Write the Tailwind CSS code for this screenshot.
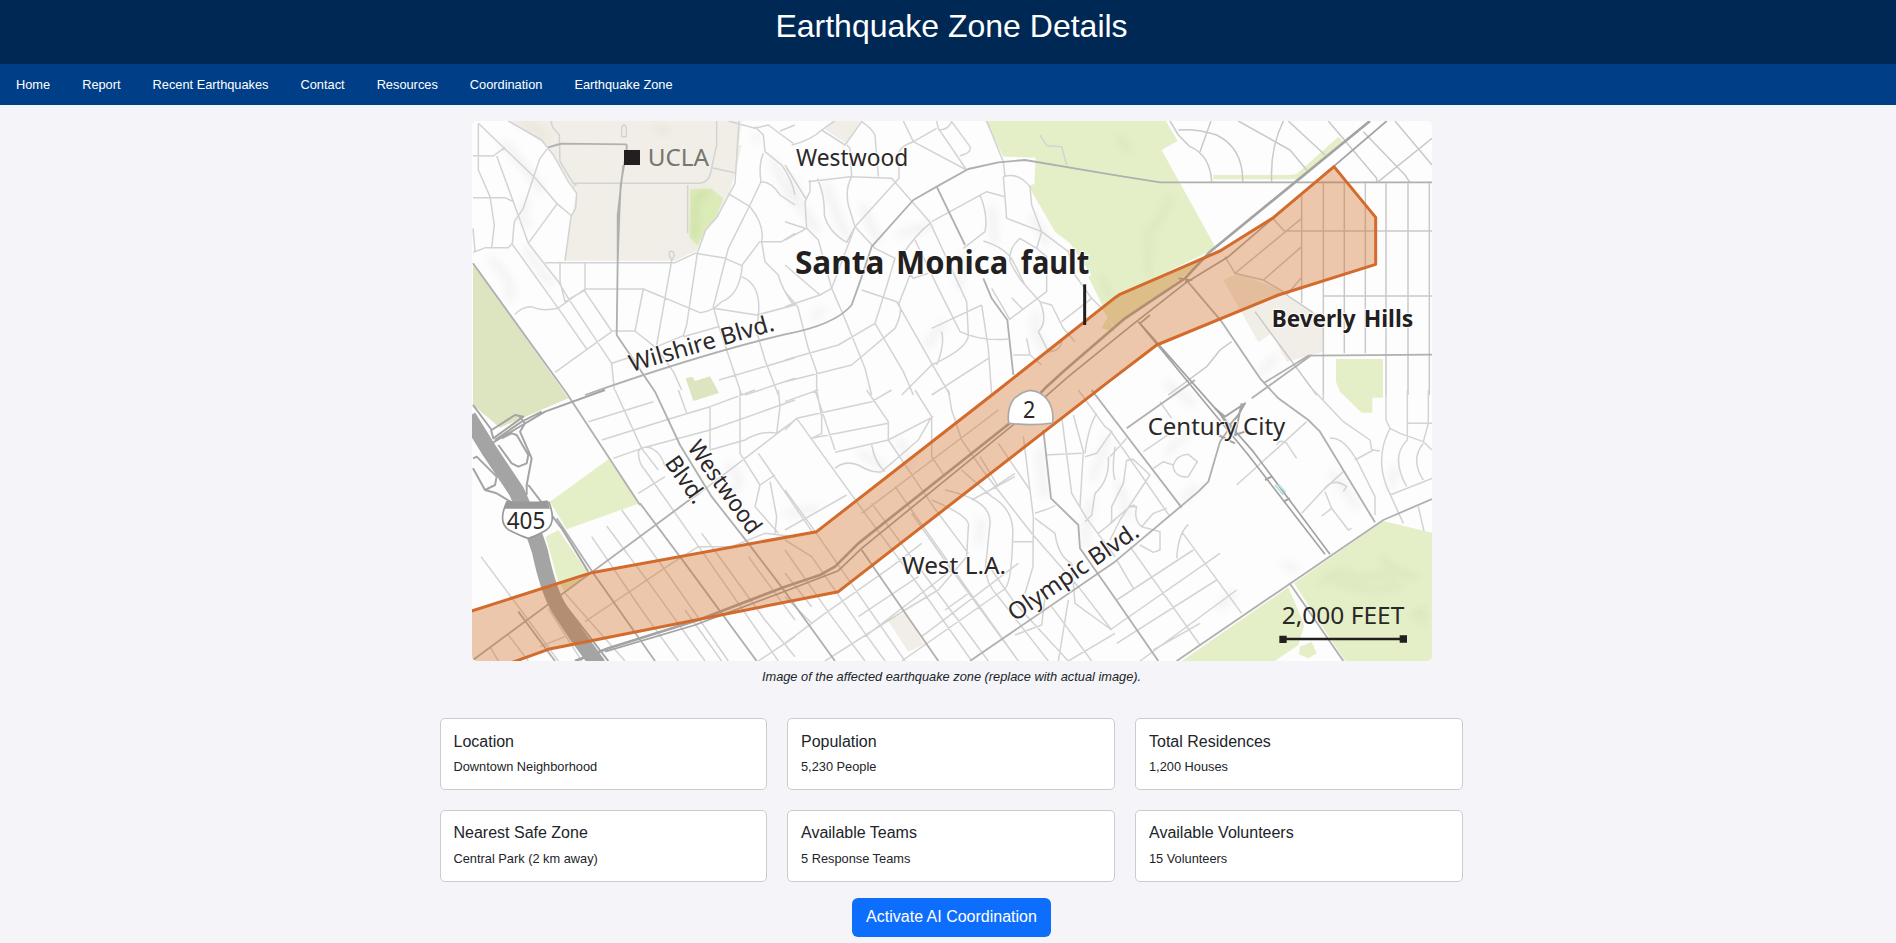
<!DOCTYPE html>
<html lang="en">
<head>
<meta charset="utf-8">
<title>Earthquake Zone Details</title>
<script src="https://cdn.jsdelivr.net/npm/@tailwindcss/browser@4"></script>
</head>
<body class="h-[943px] overflow-hidden bg-[#f4f4f9] font-['Liberation_Sans',Arial,sans-serif] text-[#212529]">
<div class="w-[1903px]">
  <header class="h-16 bg-[#002855] pt-[7px] text-center text-white">
    <h1 class="text-[32px] leading-[38px] font-normal">Earthquake Zone Details</h1>
  </header>
  <nav class="flex h-[41px] items-center gap-8 bg-[#003f88] px-4 text-[12.8px] text-white">
    <a>Home</a><a>Report</a><a>Recent Earthquakes</a><a>Contact</a><a>Resources</a><a>Coordination</a><a>Earthquake Zone</a>
  </nav>
  <main class="flex flex-col items-center pt-4">
    <figure class="w-[959px]">
      <svg class="block h-[540px] w-[960px] rounded-[5px] bg-[#fdfdfd]" viewBox="21 18 2880 1620" font-family="'Noto Sans', sans-serif" stroke-linejoin="round">
        <defs><filter id="soft" x="-20%" y="-20%" width="140%" height="140%"><feGaussianBlur stdDeviation="12"/></filter></defs>
        <!-- terrain shading -->
        <g fill="none" stroke="#e6e6e6" stroke-width="22" opacity=".5" filter="url(#soft)">
          <path d="M110 80Q190 160 230 230M190 250Q150 320 200 330M70 430Q160 500 130 560M180 400Q230 470 260 510M920 130L990 270M870 80L880 60M980 190Q1010 290 1060 350M1080 200Q1120 320 1150 370M1190 270L1240 380M1300 360L1400 330M1440 620L1380 700M1580 270L1590 390M1700 300L1750 390M1720 590Q1690 640 1750 720M1500 410L1480 520M1040 610L1080 580M1300 970L1340 1050M1260 1060L1180 1010M960 1200L1060 1180M780 1050Q850 1080 800 1140M1550 1210L1540 1290M1720 1000L1740 1150M1880 1150Q1850 1280 1870 1300M2100 1020L2180 940M2150 1160L2200 1110M2450 1350L2500 1360M2260 1480L2310 1430M1880 1100L1930 960M1960 1100L1990 1210M2600 1070L2680 1180M2790 1050L2780 1120M2100 800L2190 870M2380 780L2440 720"/>
        </g>
        <!-- campus and civic areas -->
        <g fill="#f0eee6">
          <path d="M130 18H765L755 90H830L812 175L790 240L755 310L722 342L700 405L630 437H298L320 300L335 235L265 120L230 80Z"/>
          <path d="M1100 18H1188L1142 85L1075 40Z"/>
          <path d="M765 18H830L812 175L740 158L755 40Z"/>
          <path d="M2275 495L2320 475L2435 520L2575 610V710L2465 740L2420 655L2380 682Z"/>
          <path d="M1268 1515L1320 1493L1378 1588L1330 1610Z"/>
        </g>
        <path d="M170 22Q220 30 245 75M570 40L610 50" stroke="#ddd8cd" stroke-width="8" fill="none" filter="url(#soft)"/>
        <!-- parks -->
        <g fill="#e4efc8">
          <path d="M675 222L740 222L775 250L750 315L722 345L697 392L672 365Z" fill="#dcecb9"/>
          <path d="M24 445L310 850L105 938L24 870Z" fill="#dde5c0"/>
          <path d="M662 790L682 785L690 798L735 784L762 834L685 858Z" fill="#dde5c0"/>
          <path d="M1560 18H2103L2138 78L2090 105L2253 400L1965 538L1910 640L1950 650L1870 485L1880 480L1815 385L1770 350L1690 212L1708 207L1712 128L1615 125Z"/>
          <path d="M1965 538L2253 410L1950 640L1910 580Z"/>
          <path d="M2245 180H2475L2495 177L2620 65L2635 80L2510 193H2245Z"/>
          <path d="M2613 732H2754V848H2722V893H2690L2625 830L2613 800Z"/>
          <path d="M255 1160L430 1033L523 1165L305 1243Z"/>
          <path d="M242 1265L280 1245L370 1375L300 1430L280 1400Z"/>
          <path d="M2487 1405L2755 1218L2901 1253V1638H2640Z"/>
          <path d="M2150 1638L2470 1417L2518 1530L2500 1590L2430 1638Z"/>
          <path d="M2505 1595L2540 1580L2555 1615L2530 1630L2502 1618Z"/>
        </g>
        <path d="M2560 1410Q2600 1370 2640 1370L2680 1390Q2750 1370 2790 1390M2760 1320Q2740 1350 2860 1390M2600 1395Q2700 1440 2820 1410M2840 1510Q2890 1450 2870 1530" fill="none" stroke="#c9d5a8" stroke-width="9" opacity=".7" filter="url(#soft)"/>
        <path d="M1960 60Q1980 100 1995 110M2120 240Q2080 330 2050 350V480M1910 480L1935 550" fill="none" stroke="#cbd8ad" stroke-width="9" opacity=".7" filter="url(#soft)"/>
        <path d="M690 370Q680 250 710 235L735 240" fill="none" stroke="#b9cf91" stroke-width="14" opacity=".6" filter="url(#soft)"/>

        <!-- local streets, north-west -->
        <g fill="none" stroke="#d3d3d3" stroke-width="4.5">
          <path d="M40 25L210 188L275 265L320 303M40 25V165L75 245L88 330L80 398M24 122L85 123L120 97M95 123L145 260L190 385L280 500L310 550L440 745L448 825M24 248H120L145 260M24 340L30 410M24 412L62 398H130L142 385L148 320L175 280L205 188L225 130L250 97L285 85M275 268L192 382M130 18L230 75L265 120L310 200L335 235L332 280L318 305L300 437M258 18L262 35L283 60L285 140L325 205L345 205H700Q735 205 740 158L755 90V18M740 158L812 174M822 18L810 205L757 305L722 345L697 415L665 630L655 662L575 695M668 210V355M325 213L340 203M470 65V38Q477 22 484 38V65ZM240 443H630L690 415L775 428L830 452L884 380H950L990 355M360 443V530L440 648H510L535 522H360L278 580Q230 590 200 575Q170 575 150 598M140 385L280 580L365 702M285 440V500L300 560L360 525M535 522L705 593Q740 590 770 560Q825 540 832 450M510 648L575 700L625 770L650 825M270 772L440 650M620 437L575 690M620 435Q605 410 620 408Q635 415 620 437M790 236L855 275Q900 330 890 380L900 440L940 480Q950 520 985 570M870 35L895 60L900 110L950 150Q980 190 990 240M790 18L870 40L910 30L950 60L985 85M990 30L945 48M895 115Q880 150 888 200Q920 200 945 240L990 270M888 200L855 270L790 400L745 575L760 630L830 840M830 485Q890 510 880 600L875 650L900 735L940 840M440 745L500 725M745 580L875 600L990 570M655 665L760 635M762 795L990 728M840 840L990 790"/>
        </g>
        <g fill="none" stroke="#d3d3d3" stroke-width="4.5" transform="translate(960 0)">
          <path d="M355 18L385 80L545 165M455 18L460 40L545 165M455 40L385 80Q340 95 342 120V190L210 335L140 520M460 45Q490 45 500 20L555 95Q560 115 525 122M20 90Q80 75 110 45L180 90L230 20Q260 40 270 60L280 185M150 18L110 45M70 200L195 185L320 190L435 322L545 560L550 660Q550 700 440 750L350 840M75 195V230L60 260L65 340L100 375L140 520L175 600L240 760L260 840M0 375L65 340M0 150L65 255M0 320L60 340M97 190Q120 240 118 300Q130 350 185 382L210 335L190 270Q180 220 200 185L195 100L185 90M210 335L270 400L330 430L300 530L270 625L160 690L0 735M230 525L335 560L440 745L495 840M335 560Q360 580 330 640L200 750L0 800M270 625L355 770L385 840M0 450L105 540L140 520M105 540L0 575M0 530L38 575L70 700L95 770V840M440 320L605 230L660 245M585 240Q610 300 600 350L535 400M390 375L460 520L525 650Q590 680 670 672M435 325Q390 360 345 430L385 490L375 480L340 570M385 490L430 475M595 378Q670 400 690 450L720 510L765 560Q790 620 760 650L790 710Q825 710 830 680M705 370L755 400L785 425V530L675 612M705 370Q670 400 675 440Q700 490 720 510M770 350L755 400M655 185L665 310L770 350M655 185Q700 170 735 215L740 270L770 350L850 410L870 480L920 550L950 580M605 18L655 140L660 185M680 548L715 585M765 560L800 570L835 640L870 680M920 550L830 620M675 615Q650 570 620 520M590 570L610 700L620 840M590 570L440 640M685 720H735L770 750M725 670L735 720M610 730L440 840M470 650Q480 690 455 750M765 60L785 92L830 95L845 150"/>
        </g>
        <g fill="none" stroke="#c9c9c9" stroke-width="4.5" transform="translate(1935 0)">
          <path d="M180 18L205 60L240 95Q300 120 305 200M205 45Q260 40 320 60Q400 100 398 200M303 18L270 110M385 18L540 105L590 165M520 18Q480 100 485 200M535 18L645 120M655 18L800 190V203M760 50L885 180L900 203M855 18L966 150M966 70L805 200M575 240V565M640 205V840M703 205V715M766 205V715M828 205V840M894 205V840M958 205V840M525 348H966M640 543H966M490 312L525 350M575 310L375 475M575 395L460 495M575 487L530 540L605 590L640 640M345 425L375 475L460 495L520 530M435 590L620 840M365 680L330 705L290 755L175 840"/>
        </g>

        <!-- local streets, south -->
        <g fill="none" stroke="#d3d3d3" stroke-width="4.5" transform="translate(0 825)">
          <path d="M370 95L565 35M410 150L620 85L735 50L870 0M445 205L530 175L735 120L990 30M450 0L530 175L580 240M520 185Q530 165 560 175Q590 190 600 230M520 185Q520 220 540 240L680 440L820 640L910 770L940 813M640 0L665 70M825 0V190L885 285L870 350L940 430M735 50V180M735 180L840 150Q890 120 935 130M940 0L945 50L935 130L990 90M520 310L600 260M690 320L990 90M880 190L1045 430M885 285L930 255M915 275L935 380L930 430M380 440L530 660L640 813M425 408L560 590L720 813M470 360L600 540L790 813M710 430L770 510L900 690L990 800M48 500L190 690L280 813M130 735L190 813M75 770L100 813M250 655L350 813M360 695L620 520L700 470H800L900 430L990 440M225 770L300 740M300 610L480 813M850 500L990 690M660 660L770 813M880 813L990 740"/>
        </g>
        <g fill="none" stroke="#d3d3d3" stroke-width="4.5" transform="translate(960 825)">
          <path d="M0 35L100 0M95 0L110 80V130L80 145M0 120L35 85L260 35L320 0M35 85L240 370L400 585L560 813M90 0L150 180M150 187L310 150L445 80M245 0L310 95V150L445 350L550 490M150 235Q180 210 220 225Q260 250 290 245L400 150L440 80M80 145L310 100M390 0L440 80V200L480 260M260 165Q270 220 300 245M490 0L500 60L530 150L600 250L740 430L880 590L980 720M0 420L185 315M0 300L80 410L360 813M230 370L640 60M0 450L80 500L240 730L300 813M260 340L430 570L610 813M330 290L700 813M380 370L500 540L700 813M440 330Q560 380 550 410L545 500L460 600L360 660L120 813M480 300Q620 330 615 400L605 500Q590 570 640 620L790 813M530 240L620 320Q690 360 683 440Q680 590 655 600L350 813M560 330L690 260M600 310L690 250M640 160L735 300L745 380L744 530L720 610M683 455H745M585 200L640 290M715 140L735 300M750 370Q810 350 810 345M750 385L810 430Q820 500 860 520L870 640L980 720M690 735L770 705L780 620M850 630L820 813M830 80L860 310L905 385L990 500M865 75L895 185L885 350M890 190L780 195M935 70Q910 110 900 190M880 0L960 110L980 125L935 190L900 200M970 200Q975 270 930 310L920 375L900 395M0 760L120 670L320 530L410 460M80 700L0 620M0 550L80 650M0 480L140 680L240 813M220 680L400 560M240 740L500 540M410 740L700 520M480 660L550 610M620 540L690 640L850 813M800 650L920 813M850 813L990 730M990 170Q980 240 990 270M940 430L990 390"/>
        </g>
        <g fill="none" stroke="#d3d3d3" stroke-width="4.5" transform="translate(1935 825)">
          <path d="M0 120L180 380M150 35L185 85M100 185L180 130M50 210L40 280L5 350V395M50 210L70 208L120 255L30 390L0 450M130 235L160 215L190 225M190 225Q200 195 235 193L262 215L235 260Q200 265 190 235ZM0 400L60 350L80 350Q70 390 95 410L130 370L170 355M60 350L75 345M95 410L150 425V480L130 487L90 465M200 505Q205 430 235 403M215 425L395 670M20 630L250 480M0 720L330 490M20 760L320 570M90 813L380 600M130 780L270 700M60 470L270 765M20 510L70 595M0 200L50 145M380 285L430 240L590 95M575 370L640 300L700 245M640 300Q670 260 710 290L700 305M645 305L665 355L715 420L725 415M665 355L635 378M500 165Q510 145 530 160L560 205M660 145Q700 140 740 210L795 320V375M735 210L790 180L810 183M610 0L700 95L780 150L785 180M640 0V30M828 0V90L840 115Q795 200 830 290L880 400M840 115L870 130L940 155L966 180M892 0V100H966M955 0V100L940 155M892 100V150Q840 200 890 290M940 160Q900 210 940 270M840 315L966 265M925 350L942 423"/>
        </g>

        <!-- arterials -->
        <g fill="none" stroke="#b0b0b0" stroke-width="5.5">
          <path d="M250 97L290 86L485 88M475 150L458 300V440M485 88V105L467 210L463 300L458 440L455 660L570 830L645 990L740 1145L850 1285M24 445L305 835L525 1170M360 840Q700 720 960 658Q1110 630 1160 570L1185 500L1220 395L1345 255L1415 215L1510 162L1600 142L1680 135L1935 178L2085 202H2901M1415 215L1500 390M1555 490L1580 550L1627 615L1645 780"/>
          <path d="M1735 945L1758 1150L1840 1230L1845 1300L1950 1450L2080 1638"/>
          <path d="M525 1165L660 1345L875 1638M275 1210L385 1375L570 1638M850 1285L960 1430L1110 1638M1190 1305L1420 1638"/>
          <path d="M24 1635L700 1135M1515 1638L1950 1340L2200 1130L2230 1100L2265 980L2300 930"/>
          <path d="M1880 825L2150 1178M2160 490L2270 620L2385 790L2440 850L2530 915L2565 950L2730 1222M1985 940L2190 795M2360 850L2540 720M2395 805L2530 722L2901 719"/>
          <path d="M2135 1638L2755 1215L2901 1152M2473 1403L2635 1638"/>
          <path d="M160 1490L270 1638"/>
        </g>
        <!-- Santa Monica Blvd. and parallel carriageways -->
        <g fill="none" stroke="#a3a3a3" stroke-width="8">
          <path d="M2715 18L2235 410L2160 490L1980 610L1800 765L1740 820L1650 912L1180 1285L1110 1355L1065 1380L960 1415L700 1515L430 1600L330 1638"/>
          <path d="M2765 18L2290 425L2160 505L1995 635L1810 785L1650 925L1190 1300L1120 1367L970 1425L690 1530L420 1610" stroke-width="5"/>
          <path d="M2055 600L2025 625L2365 1010L2595 1318M2020 620L2350 1020L2580 1318M2140 490L2180 495L2160 500" stroke-width="5"/>
          <path d="M2250 880L2280 905L2310 885L2340 865L2320 900L2290 935L2265 895L2300 945M2330 865L2310 960L2340 950M2260 960L2310 985M2400 1095L2420 1085M2455 1160L2475 1150" stroke-width="6"/>
        </g>
        <path d="M2430 1110L2455 1140M2440 1108L2462 1132" stroke="#b4dfe0" stroke-width="5"/>

        <!-- Interstate 405 and ramps -->
        <g fill="none" stroke="#a4a4a4">
          <path d="M10 905L75 1010L155 1130Q200 1230 225 1310Q250 1430 285 1485L335 1560L400 1650" stroke-width="48"/>
          <path d="M24 870L80 945L150 900L175 905L85 970L78 945M80 985L240 890L420 825M90 975L170 920L230 890M160 900L180 925L165 950L200 1030L185 1110V1140M110 970L140 955L155 960L190 1020L185 1045L160 1055L140 1045L100 990M24 1030L35 1025L95 1085L90 1110L60 1125L24 1060M60 1125L95 1135L145 1165M190 1110L290 1240L370 1370M300 1470L370 1560L430 1638" stroke-width="6"/>
        </g>

        <!-- fault zone -->
        <path d="M10 1491L380 1373L1055 1250L1600 825L1950 548L1965 538L2265 408L2425 308L2607 155L2732 307V448L2440 540L2075 690L1935 797L1120 1430L250 1603L120 1650H10Z" fill="#d2691e" fill-opacity=".37" stroke="#d36b2c" stroke-width="9"/>

        <!-- highway shields -->
        <path d="M125 1162H252Q275 1222 245 1244Q215 1262 190 1270Q165 1262 130 1244Q98 1220 125 1162Z" fill="#fff" stroke="#999" stroke-width="5"/>
        <path d="M124 1158L135 1158Q180 1170 247 1156L255 1181H119Z" fill="#999"/>
        <path d="M1631 924Q1625 880 1648 850Q1675 828 1695 826Q1725 828 1744 850Q1768 880 1763 924Q1695 934 1631 924Z" fill="#fff" stroke="#aaa" stroke-width="5"/>

        <!-- place names -->
        <rect x="477" y="105" width="48" height="45" fill="#231f20"/>
        <path d="M1859 508V630" stroke="#231f20" stroke-width="9"/>
        <g fill="#2b2829" font-size="71" stroke="#fff" stroke-width="7" stroke-opacity=".75" paint-order="stroke">
          <text x="548" y="153" textLength="184" lengthAdjust="spacingAndGlyphs" fill="#77756f" stroke="none">UCLA</text>
          <text x="993" y="154" textLength="337" lengthAdjust="spacingAndGlyphs">Westwood</text>
          <g font-size="98" font-weight="700" fill="#231f20">
            <text x="990" y="478" textLength="268" lengthAdjust="spacingAndGlyphs">Santa</text>
            <text x="1293" y="478" textLength="337" lengthAdjust="spacingAndGlyphs">Monica</text>
            <text x="1667" y="478" textLength="206" lengthAdjust="spacingAndGlyphs">fault</text>
          </g>
          <g font-size="70" font-weight="700" fill="#231f20">
            <text x="2420" y="636" textLength="252" lengthAdjust="spacingAndGlyphs">Beverly</text>
            <text x="2696" y="636" textLength="149" lengthAdjust="spacingAndGlyphs">Hills</text>
          </g>
          <text transform="translate(500 771) rotate(-16.2)" textLength="450" lengthAdjust="spacingAndGlyphs">Wilshire Blvd.</text>
          <text transform="translate(665 998) rotate(54.5)" textLength="325" lengthAdjust="spacingAndGlyphs">Westwood</text>
          <text transform="translate(597 1044) rotate(54.5)" textLength="156" lengthAdjust="spacingAndGlyphs">Blvd.</text>
          <text x="125" y="1242" textLength="116" lengthAdjust="spacingAndGlyphs">405</text>
          <text x="1674" y="910" textLength="37" lengthAdjust="spacingAndGlyphs">2</text>
          <text x="2048" y="959" textLength="413" lengthAdjust="spacingAndGlyphs">Century City</text>
          <text x="1311" y="1377" textLength="312" lengthAdjust="spacingAndGlyphs">West L.A.</text>
          <text transform="translate(1649 1521) rotate(-34.5)" textLength="459" lengthAdjust="spacingAndGlyphs">Olympic Blvd.</text>
          <text x="2450" y="1527" textLength="368" lengthAdjust="spacingAndGlyphs" stroke="none">2,000 FEET</text>
        </g>
        <path d="M2455 1572H2814" stroke="#231f20" stroke-width="8"/>
        <path d="M2443 1562h22v22h-22zM2804 1561h22v22h-22z" fill="#231f20"/>
      </svg>
      <figcaption class="pt-[6px] text-center text-[12.8px] leading-5 italic">Image of the affected earthquake zone (replace with actual image).</figcaption>
    </figure>
    <section class="mt-[31px] grid w-[1023px] grid-cols-[327px_328px_328px] gap-5">
      <div class="h-[72px] rounded-[5px] border border-[#ccc] bg-white px-[12.5px] pt-[13px]"><h5 class="text-base leading-5">Location</h5><p class="mt-[5px] text-[12.8px] leading-5">Downtown Neighborhood</p></div>
      <div class="h-[72px] rounded-[5px] border border-[#ccc] bg-white px-[13px] pt-[13px]"><h5 class="text-base leading-5">Population</h5><p class="mt-[5px] text-[12.8px] leading-5">5,230 People</p></div>
      <div class="h-[72px] rounded-[5px] border border-[#ccc] bg-white px-[13px] pt-[13px]"><h5 class="text-base leading-5">Total Residences</h5><p class="mt-[5px] text-[12.8px] leading-5">1,200 Houses</p></div>
      <div class="h-[72px] rounded-[5px] border border-[#ccc] bg-white px-[12.5px] pt-3"><h5 class="text-base leading-5">Nearest Safe Zone</h5><p class="mt-1.5 text-[12.8px] leading-5">Central Park (2 km away)</p></div>
      <div class="h-[72px] rounded-[5px] border border-[#ccc] bg-white px-[13px] pt-3"><h5 class="text-base leading-5">Available Teams</h5><p class="mt-1.5 text-[12.8px] leading-5">5 Response Teams</p></div>
      <div class="h-[72px] rounded-[5px] border border-[#ccc] bg-white px-[13px] pt-3"><h5 class="text-base leading-5">Available Volunteers</h5><p class="mt-1.5 text-[12.8px] leading-5">15 Volunteers</p></div>
    </section>
    <button class="mt-4 h-[39px] w-[199px] rounded-md bg-[#0d6efd] pb-0.5 text-base text-white">Activate AI Coordination</button>
  </main>
</div>
</body>
</html>
